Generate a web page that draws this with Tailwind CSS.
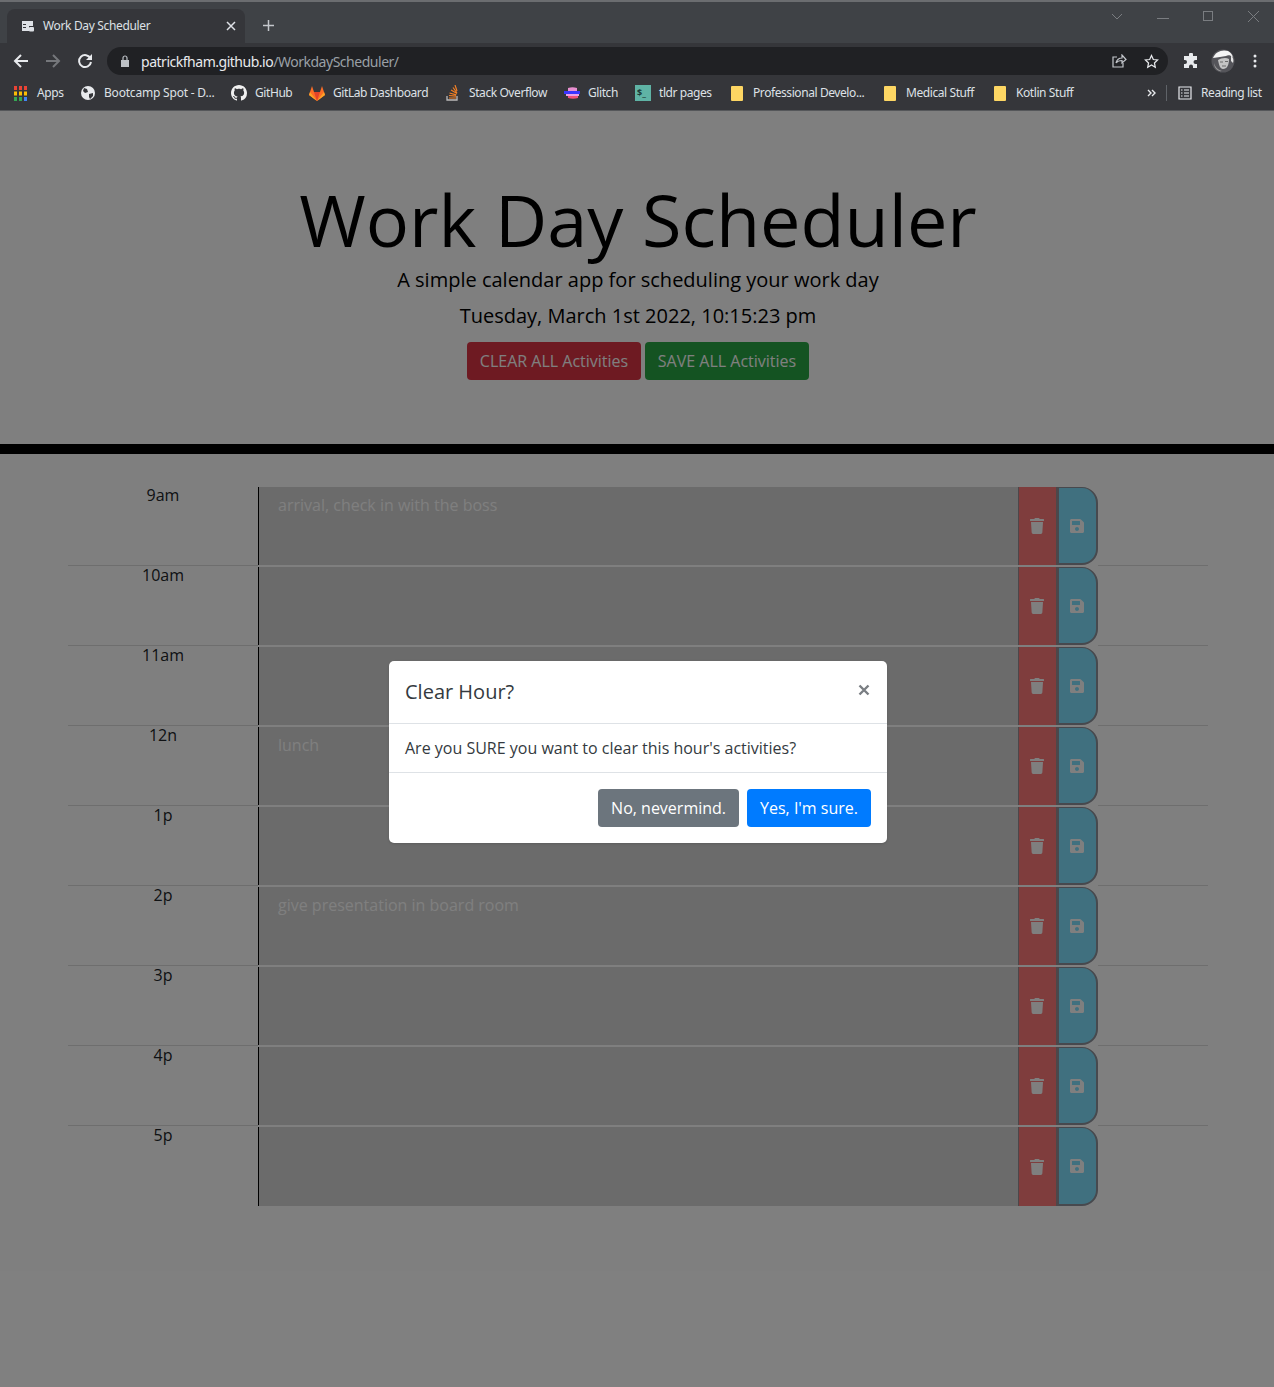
<!DOCTYPE html>
<html lang="en">
<head>
  <meta charset="UTF-8">
  <title>Work Day Scheduler</title>
  <script src="https://cdn.jsdelivr.net/npm/@tailwindcss/browser@4"></script>
</head>
<body class="relative w-[1274px] h-[1387px] overflow-hidden bg-white font-['Open_Sans',sans-serif] text-[#212529]">

  <!-- browser chrome -->
  <div class="h-[111px] bg-[#35363a] text-[#dee1e6] font-['Noto_Sans',sans-serif]">
    <div class="h-[43px] bg-[#3f4246] border-t-2 border-[#6b6d70] flex items-end pl-[7px]">
      <div class="w-[238px] h-[34px] bg-[#35363a] rounded-t-lg flex items-center pl-[14px] pr-[9px] pb-px">
        <svg class="w-[14px] h-[14px] shrink-0" viewBox="0 0 14 14"><path fill="#dee1e6" d="M1 2h11v5H8v5H1z"/><path fill="#35363a" d="M2 5h3v1H2zM2 8h3v1H2z"/><rect x="8" y="8" width="5" height="4.500" rx="1" fill="#dee1e6"/></svg>
        <span class="ml-[8px] text-[12px] whitespace-nowrap tracking-[-0.35px]">Work Day Scheduler</span>
        <svg class="ml-auto w-[10px] h-[10px]" viewBox="0 0 10 10"><path d="M1 1l8 8M9 1l-8 8" stroke="#dee1e6" stroke-width="1.500"/></svg>
      </div>
      <svg class="ml-[17px] mb-[11px] w-[13px] h-[13px]" viewBox="0 0 13 13"><path d="M6.500 1v11M1 6.500h11" stroke="#c4c7cc" stroke-width="1.500"/></svg>
      <div class="ml-auto self-start flex items-center">
        <svg class="w-[12px] h-[8px] mr-[34px] mt-[9px]" viewBox="0 0 12 8"><path d="M1 1l5 5 5-5" fill="none" stroke="#7a7d81"/></svg>
        <div class="w-[12px] h-px bg-[#7a7d81] mr-[34px] mt-[12px]"></div>
        <div class="w-[10px] h-[10px] border border-[#7a7d81] mr-[35px] mt-[8px]"></div>
        <svg class="w-[11px] h-[11px] mr-[15px] mt-[9px]" viewBox="0 0 11 11"><path d="M0 0l11 11M11 0l-11 11" stroke="#7a7d81"/></svg>
      </div>
    </div>

    <div class="h-[36px] flex items-center">
      <svg class="ml-[13px] w-[16px] h-[16px]" viewBox="0 0 16 16"><path d="M15 8H2M8 2L2 8l6 6" fill="none" stroke="#e8eaed" stroke-width="2"/></svg>
      <svg class="ml-[16px] w-[16px] h-[16px]" viewBox="0 0 16 16"><path d="M1 8h13M8 2l6 6-6 6" fill="none" stroke="#75777b" stroke-width="2"/></svg>
      <svg class="ml-[16px] w-[16px] h-[16px]" viewBox="0 0 16 16"><path d="M13.500 5.500A6 6 0 1 0 14 9" fill="none" stroke="#e8eaed" stroke-width="2"/><path fill="#e8eaed" d="M15 1v6H9z"/></svg>
      <div class="ml-[14px] w-[1061px] h-[28px] bg-[#202124] rounded-full flex items-center pl-[13px] pr-[9px]">
        <svg class="w-[10px] h-[12px]" viewBox="0 0 10 12"><path fill="#bdc1c6" d="M1 5h8v7H1z"/><path d="M3 5V3a2 2 0 0 1 4 0v2" fill="none" stroke="#bdc1c6" stroke-width="1.200"/></svg>
        <span class="ml-[11px] text-[14px] whitespace-nowrap tracking-[-0.48px] text-[#e8eaed]">patrickfham.github.io<span class="text-[#9aa0a6]">/WorkdayScheduler/</span></span>
        <svg class="ml-auto w-[15px] h-[14px]" viewBox="0 0 15 14"><path d="M5 3H1v10h10V9" fill="none" stroke="#c4c7cc" stroke-width="1.200"/><path d="M4 9c1-4 4-5 6-5V1l4 4.500L10 9V6.500C8 6.500 5.500 7 4 9z" fill="none" stroke="#c4c7cc" stroke-width="1.200"/></svg>
        <svg class="ml-[17px] w-[15px] h-[15px]" viewBox="0 0 24 24"><path d="M12 2.500l2.900 6.300 6.800.8-5 4.700 1.300 6.800-6-3.400-6 3.400 1.300-6.800-5-4.700 6.800-.8z" fill="none" stroke="#e8eaed" stroke-width="2"/></svg>
      </div>
      <svg class="ml-[15px] w-[16px] h-[16px]" viewBox="0 0 16 16"><path fill="#e8eaed" d="M6 1.500a2 2 0 0 1 4 0V3h4v4h-1.500a2 2 0 0 0 0 4H14v4H10v-1.500a2 2 0 0 0-4 0V15H1v-4h1a2 2 0 0 0 0-4H1V3h5z"/></svg>
      <svg class="ml-[12px] w-[24px] h-[24px]" viewBox="0 0 24 24"><circle cx="12" cy="12" r="11.500" fill="#55555a"/><path d="M2 9C4 3 11 0 17 2c2 1 4 3 5 6-3-2-5-2-7-1-4 1-8 1-13 2z" fill="#f4f4f4"/><path d="M20 6c2 2 3 5 2 8l-2-2z" fill="#e4e4e4"/><path d="M7 11c3-2 8-3 11-1 0 6-2 10-6 10-3 0-4-4-5-9z" fill="#c4c4c4"/><path d="M9 13h3M14 12.500h3M11 17h4" stroke="#6a6a6a" stroke-width="1"/><path d="M3 14c1 4 4 7 8 8-4 1-8-3-8-8z" fill="#9a9a9a"/></svg>
      <svg class="ml-[18px] w-[4px] h-[14px]" viewBox="0 0 4 14"><circle cx="2" cy="2" r="1.500" fill="#e8eaed"/><circle cx="2" cy="7" r="1.500" fill="#e8eaed"/><circle cx="2" cy="12" r="1.500" fill="#e8eaed"/></svg>
    </div>

    <div class="h-[32px] border-b border-[#55575a] pl-[14px] pb-[3px] flex items-center text-[12px] whitespace-nowrap tracking-[-0.42px]">
      <div class="w-[67px] flex items-center">
        <svg class="w-[13px] h-[15px] mr-[10px]" viewBox="0 0 13 15"><path fill="#ea4335" d="M0 0h3v4H0zM5 0h3v4H5zM10 0h3v4h-3z"/><path fill="#fbbc05" d="M0 5.500h3v4H0zM5 5.500h3v4H5zM10 5.500h3v4h-3z"/><path fill="#34a853" d="M0 11h3v4H0zM5 11h3v4H5z"/><path fill="#4285f4" d="M10 11h3v4h-3z"/></svg>
        <span>Apps</span>
      </div>
      <div class="w-[150px] flex items-center">
        <svg class="w-[14px] h-[14px] mr-[9px]" viewBox="0 0 14 14"><circle cx="7" cy="7" r="7" fill="#e8eaed"/><path fill="#35363a" d="M3 2l3 1 1 3-3 1-2-2zM8 8l4-1 0 3-3 3-1-2z"/></svg>
        <span class="tracking-[-0.2px]">Bootcamp Spot - D...</span>
      </div>
      <div class="w-[78px] flex items-center">
        <svg class="w-[16px] h-[16px] mr-[8px]" viewBox="0 0 16 16"><path fill="#f0f0f0" d="M8 0C3.580 0 0 3.580 0 8c0 3.540 2.290 6.530 5.470 7.590.4.070.55-.17.55-.38 0-.19-.01-.82-.01-1.490-2.010.37-2.530-.49-2.690-.94-.09-.23-.48-.94-.82-1.130-.28-.15-.68-.52-.01-.53.630-.01 1.080.58 1.230.82.720 1.210 1.870.870 2.330.660.070-.52.280-.87.510-1.070-1.780-.2-3.640-.89-3.640-3.950 0-.87.310-1.590.820-2.150-.08-.2-.36-1.020.080-2.120 0 0 .670-.21 2.200.820.640-.18 1.320-.27 2-.27s1.360.090 2 .27c1.530-1.040 2.200-.82 2.200-.82.440 1.100.160 1.920.080 2.120.510.560.820 1.270.820 2.150 0 3.070-1.870 3.750-3.650 3.950.290.250.540.730.540 1.480 0 1.070-.010 1.930-.010 2.200 0 .210.150.460.550.380A8.010 8.010 0 0 0 16 8c0-4.420-3.580-8-8-8z"/></svg>
        <span>GitHub</span>
      </div>
      <div class="w-[136px] flex items-center">
        <svg class="w-[16px] h-[15px] mr-[8px]" viewBox="0 0 16 15"><path fill="#fc6d26" d="M8 15L0 9l1-3 2-6 2 6h6l2-6 2 6 1 3z"/><path fill="#e24329" d="M8 15L5 6h6z"/><path fill="#fca326" d="M1 6l7 9-8-6zM15 6l-7 9 8-6z"/></svg>
        <span>GitLab Dashboard</span>
      </div>
      <div class="w-[119px] flex items-center">
        <svg class="w-[15px] h-[16px] mr-[9px]" viewBox="0 0 15 16"><path d="M2 11v4h10v-4" fill="none" stroke="#bcbbbb" stroke-width="1.300"/><path d="M4 13h7M4 10.500l7 .6M4.500 8l6.800 1.800M6 5l6 3.500M8 2.500l4 5.500M10 0l2 6" fill="none" stroke="#f48024" stroke-width="1.200"/></svg>
        <span>Stack Overflow</span>
      </div>
      <div class="w-[71px] flex items-center">
        <svg class="w-[16px] h-[13px] mr-[8px]" viewBox="0 0 16 13"><path fill="#e88fd0" d="M4 1c3-1 6-1 9 0v3H4z"/><path fill="#3a34ff" d="M0 4h16v3H0z"/><path fill="#e8a0e8" d="M2 7h13v2H2z"/><path fill="#f0507a" d="M4 9h10v2c-3 1-7 1-10 0z"/></svg>
        <span>Glitch</span>
      </div>
      <div class="w-[96px] flex items-center">
        <div class="w-[16px] h-[16px] mr-[8px] bg-[#5fb3a5] text-[#1c3a36] text-[9px] leading-[16px] font-bold pl-[2px] tracking-normal">$_</div>
        <span>tldr pages</span>
      </div>
      <div class="w-[153px] flex items-center">
        <div class="w-[12px] h-[15px] mr-[10px] bg-[#fdd663] rounded-[1px]"></div>
        <span>Professional Develo...</span>
      </div>
      <div class="w-[110px] flex items-center">
        <div class="w-[12px] h-[15px] mr-[10px] bg-[#fdd663] rounded-[1px]"></div>
        <span>Medical Stuff</span>
      </div>
      <div class="w-[153px] flex items-center">
        <div class="w-[12px] h-[15px] mr-[10px] bg-[#fdd663] rounded-[1px]"></div>
        <span>Kotlin Stuff</span>
      </div>
      <svg class="w-[9px] h-[8px]" viewBox="0 0 9 8"><path d="M1 1l3 3-3 3M5 1l3 3-3 3" fill="none" stroke="#e8eaed" stroke-width="1.400"/></svg>
      <div class="ml-[10px] w-px h-[16px] bg-[#5f6368]"></div>
      <svg class="ml-[11px] w-[14px] h-[14px]" viewBox="0 0 14 14"><path d="M1 1h12v12H1zM3 4h1.500M6 4h5M3 7h1.500M6 7h5M3 10h1.500M6 10h5" fill="none" stroke="#e8eaed" stroke-width="1.200"/></svg>
      <span class="ml-[9px]">Reading list</span>
    </div>
  </div>

  <!-- page -->
  <header class="h-[343px] border-b-[10px] border-black flex flex-col items-center pl-[2px] text-black">
    <h1 class="mt-[65px] text-[72px] leading-[86px]">Work Day Scheduler</h1>
    <p class="mt-[3px] text-[20px] leading-[30px]">A simple calendar app for scheduling your work day</p>
    <p class="mt-[6px] text-[20px] leading-[30px]">Tuesday, March 1st 2022, 10:15:23 pm</p>
    <div class="mt-[11px] flex gap-[4px]">
      <button class="w-[174px] h-[38px] rounded bg-[#dc3545] text-white text-[16px]">CLEAR ALL Activities</button>
      <button class="w-[164px] h-[38px] rounded bg-[#28a745] text-white text-[16px]">SAVE ALL Activities</button>
    </div>
  </header>

  <main id="rows" class="mt-[32px] ml-[68px] w-[1140px]"></main>

  <!-- modal -->
  <div class="absolute inset-0 top-[111px] bg-black/50 pt-[550px] pl-[389px]">
    <div class="w-[498px] h-[182px] bg-white rounded-[5px] shadow-sm flex flex-col text-[#343a40]">
      <div class="h-[63px] border-b border-[#dee2e6] flex items-center justify-between px-[16px]">
        <h5 class="text-[20px]">Clear Hour?</h5>
        <svg class="w-[12px] h-[12px] mb-[5px] mr-[1px]" viewBox="0 0 12 12"><path d="M1.500 1.500l9 9M10.500 1.500l-9 9" stroke="#7a7e83" stroke-width="2.400"/></svg>
      </div>
      <div class="h-[49px] border-b border-[#dee2e6] flex items-center px-[16px] text-[16px]">Are you SURE you want to clear this hour's activities?</div>
      <div class="flex-1 flex items-center justify-end gap-[8px] px-[16px]">
        <button class="h-[38px] px-[13px] rounded bg-[#6c757d] text-white text-[16px]">No, nevermind.</button>
        <button class="h-[38px] px-[13px] rounded bg-[#007bff] text-white text-[16px]">Yes, I'm sure.</button>
      </div>
    </div>
  </div>

  <script>
    const hours = [
      ['9am', 'arrival, check in with the boss'],
      ['10am', ''],
      ['11am', ''],
      ['12n', 'lunch'],
      ['1p', ''],
      ['2p', 'give presentation in board room'],
      ['3p', ''],
      ['4p', ''],
      ['5p', '']
    ];
    const trash = 'M432 32H312l-9.4-18.7A24 24 0 0 0 281.1 0H166.8a23.72 23.72 0 0 0-21.4 13.3L136 32H16A16 16 0 0 0 0 48v32a16 16 0 0 0 16 16h416a16 16 0 0 0 16-16V48a16 16 0 0 0-16-16zM53.2 467a48 48 0 0 0 47.9 45h245.8a48 48 0 0 0 47.9-45L416 128H32z';
    const save = 'M433.941 129.941l-83.882-83.882A48 48 0 0 0 316.118 32H48C21.49 32 0 53.49 0 80v352c0 26.51 21.49 48 48 48h352c26.51 0 48-21.49 48-48V163.882a48 48 0 0 0-14.059-33.941zM224 416c-35.346 0-64-28.654-64-64 0-35.346 28.654-64 64-64s64 28.654 64 64c0 35.346-28.654 64-64 64zm96-304.52V212c0 6.627-5.373 12-12 12H76c-6.627 0-12-5.373-12-12V108c0-6.627 5.373-12 12-12h228.52c3.183 0 6.235 1.264 8.485 3.515l3.48 3.48A11.996 11.996 0 0 1 320 111.48z';

    document.getElementById('rows').innerHTML = hours.map(function(h, i) {
      const last = i === hours.length - 1;
      const line = last ? '' : 'border-b border-[#dcdcdc]';
      const tall = last ? 'h-[79px]' : 'h-[78px]';
      return `
        <div class="h-[80px] flex items-start">
          <div class="w-[190px] h-[80px] pt-px text-center text-[16px] leading-[16px]">
            <div class="h-[79px] ${line}">${h[0]}</div>
          </div>
          <div class="w-[760px] ${tall} mt-px bg-[#d6d6d6] border-l border-black pl-[19px] pt-[7px] text-[16px] leading-[22px] text-white">${h[1]}</div>
          <button class="w-[40px] ${tall} mt-px bg-[#ff7a7a] border-l border-r-2 border-[#9a8f94] flex items-center justify-center pr-px">
            <svg class="w-[14px] h-[16px]" viewBox="0 0 448 512"><path fill="#fff" d="${trash}"/></svg>
          </button>
          <button class="w-[40px] ${tall} mt-px bg-[#80e1ff] border-l border-t border-r-2 border-b-2 border-[#8f939c] rounded-r-[16px] flex items-center justify-center pr-[2px]">
            <svg class="w-[14px] h-[16px]" viewBox="0 0 448 512"><path fill="#fff" d="${save}"/></svg>
          </button>
          <div class="w-[110px] h-[80px] pt-px"><div class="h-[79px] ${line}"></div></div>
        </div>`;
    }).join('');
  </script>
</body>
</html>
